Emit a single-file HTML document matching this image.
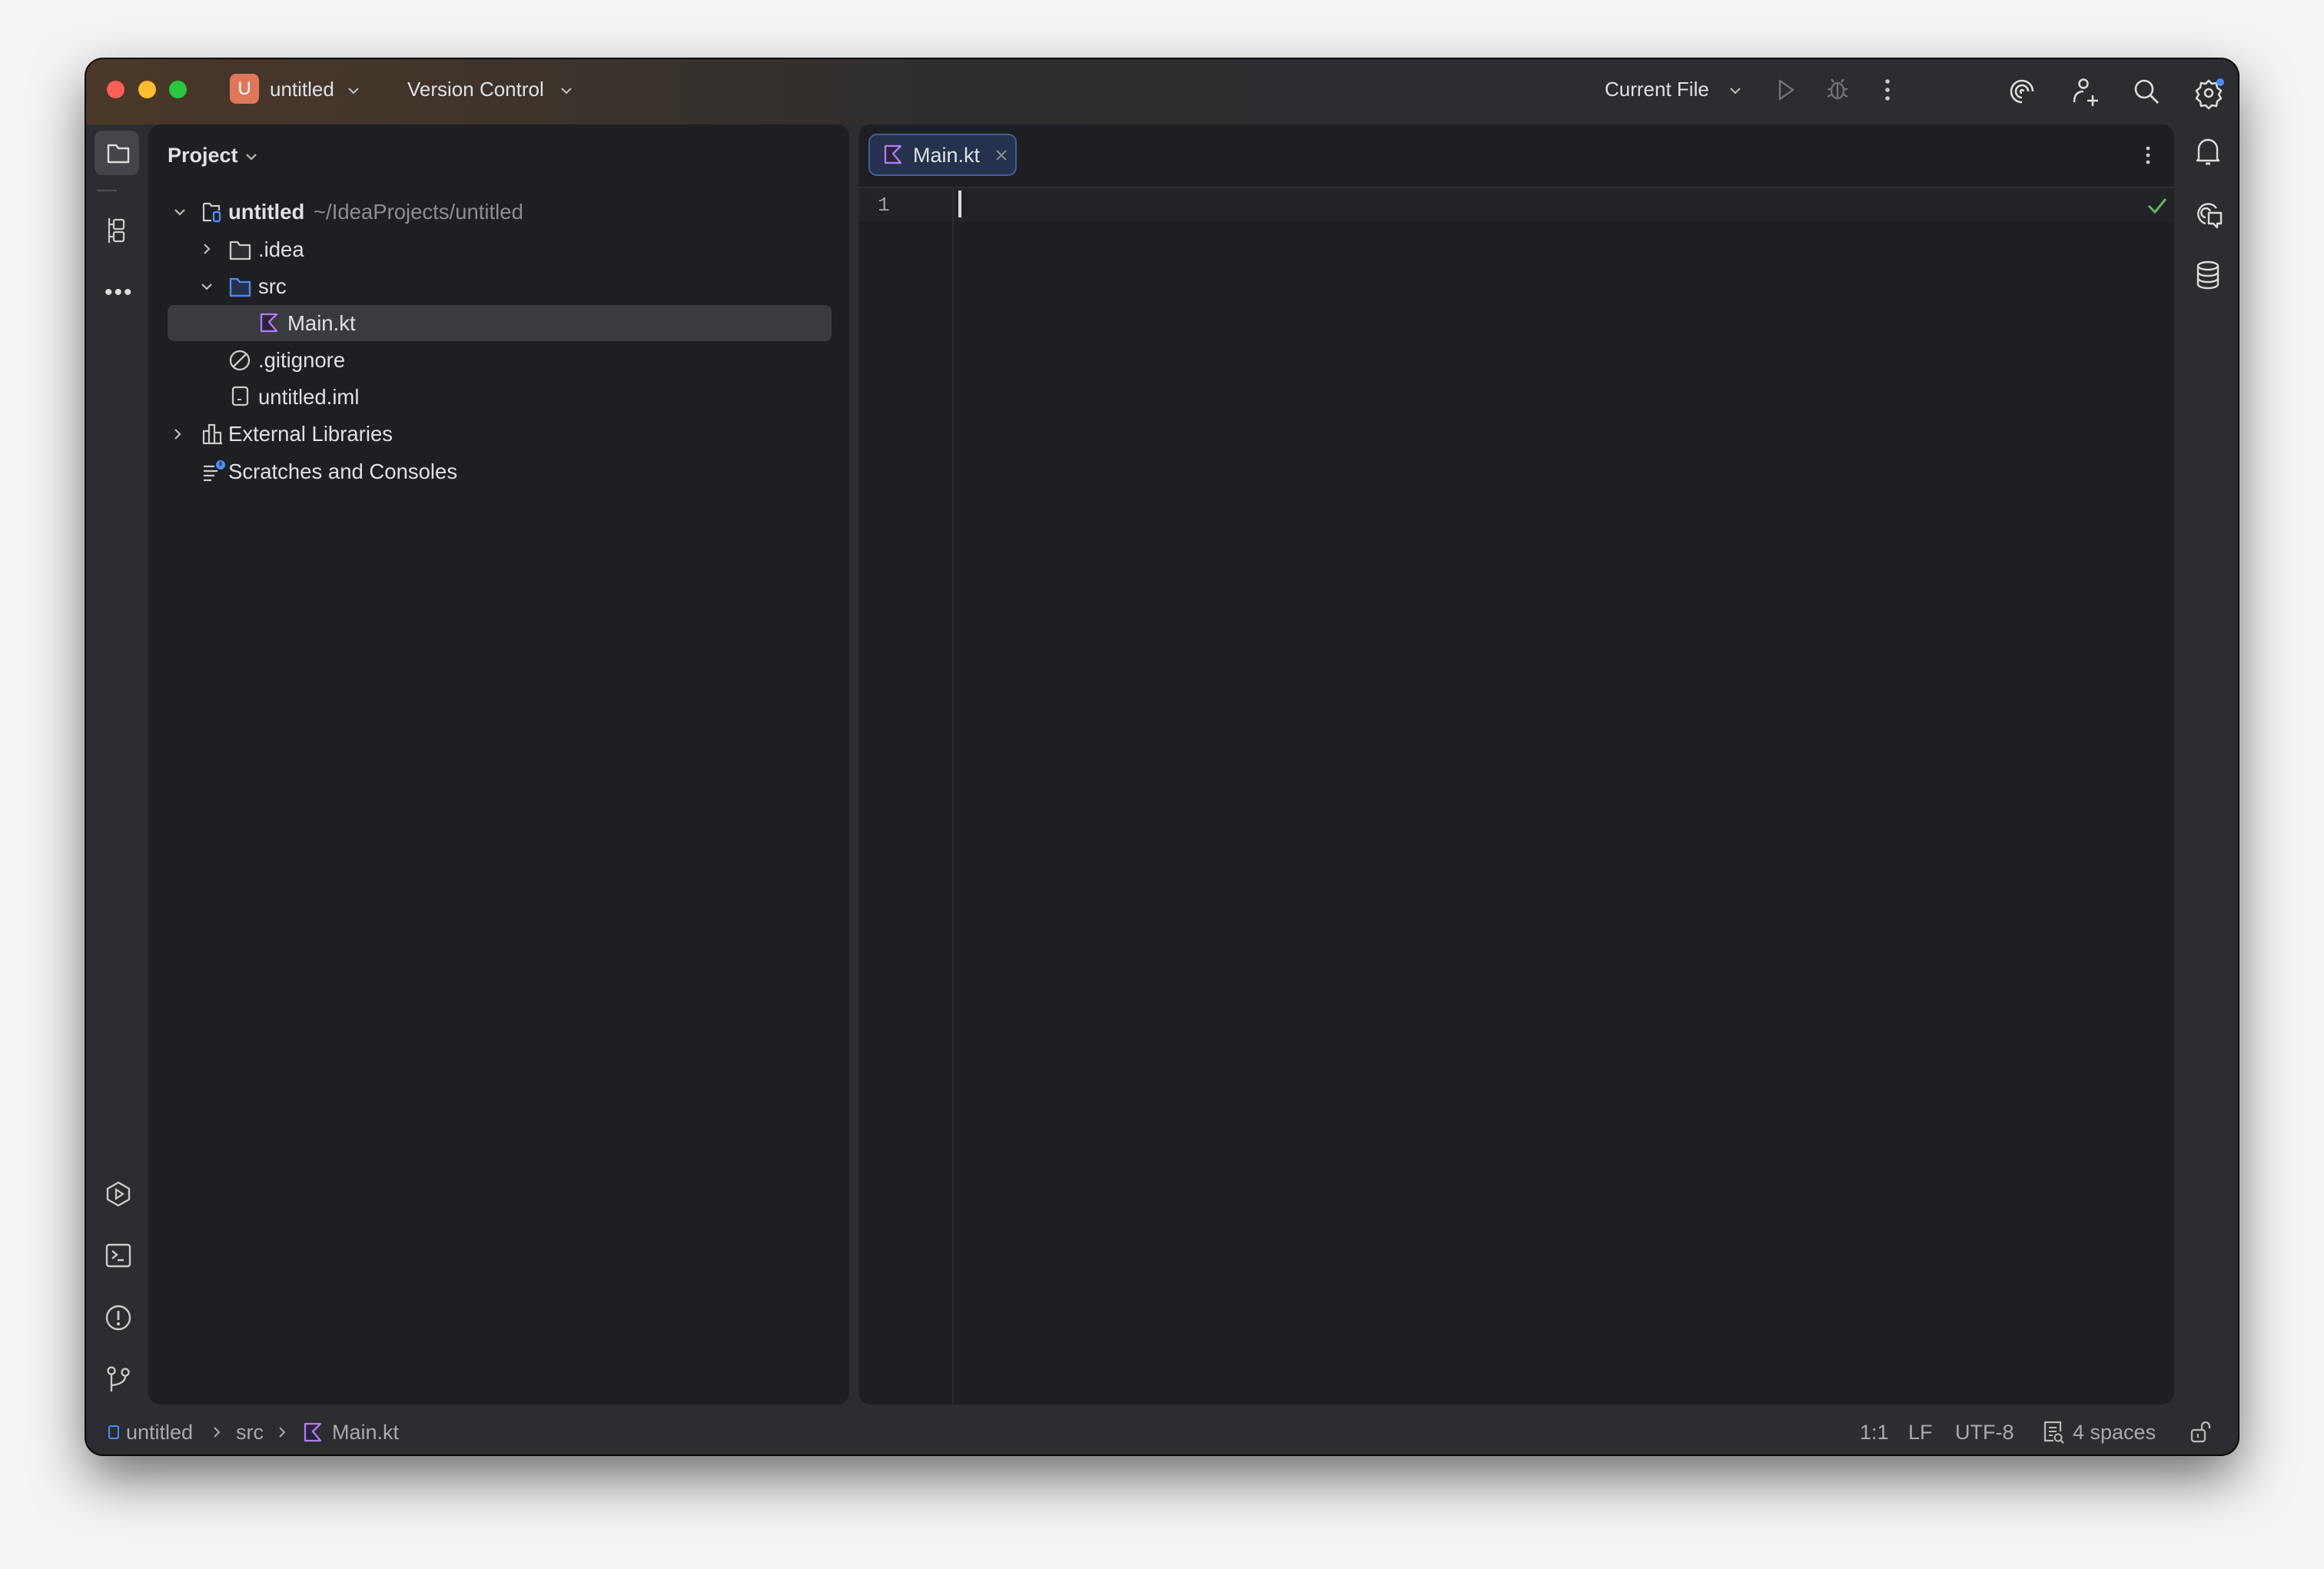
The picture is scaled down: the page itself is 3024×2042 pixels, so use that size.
<!DOCTYPE html>
<html><head><meta charset="utf-8"><style>
*{margin:0;padding:0;box-sizing:border-box}
body{width:3024px;height:2042px;background:#f4f4f4;position:relative;overflow:hidden;font-family:"Liberation Sans",sans-serif;color:#dfe1e5}
.win{position:absolute;left:112px;top:77px;width:2800px;height:1816px;border-radius:22px;background:#2b2d30;box-shadow:0 30px 70px rgba(0,0,0,.55),0 0 0 2px #0c0c0c;overflow:hidden}
.title{position:absolute;left:0;top:0;width:100%;height:85px;background:linear-gradient(90deg,#4b3828 0%,#3f342b 18%,#2e2d2e 40%,#2b2d30 60%)}
.a{position:absolute;white-space:nowrap}
.tl{position:absolute;top:28px;width:23px;height:23px;border-radius:50%}
.panel{position:absolute;background:#1e1f22;border-radius:16px}
.t{font-size:27.5px;line-height:48px;color:#dfe1e5}
svg{position:absolute;overflow:visible}
.st{font-size:27px;color:#a8abb0}
</style></head><body>
<div class="win">
 <div class="title">
  <div class="tl" style="left:27px;background:#fe5f57"></div>
  <div class="tl" style="left:68px;background:#febc2e"></div>
  <div class="tl" style="left:108px;background:#28c840"></div>
  <div class="a" style="left:187px;top:19px;width:38px;height:39px;border-radius:8px;background:#e0765a;color:#fff;font-size:24px;line-height:39px;text-align:center">U</div>
  <div class="a" style="left:239px;top:22px;font-size:26px;line-height:34px">untitled</div>
  <svg style="left:340px;top:36px" width="16" height="10"><path d="M2 2l6 6 6-6" stroke="#bbb" stroke-width="2.2" fill="none"/></svg>
  <div class="a" style="left:418px;top:22px;font-size:26px;line-height:34px">Version Control</div>
  <svg style="left:617px;top:36px" width="16" height="10"><path d="M2 2l6 6 6-6" stroke="#bbb" stroke-width="2.2" fill="none"/></svg>
  <div class="a" style="left:1976px;top:22px;font-size:26px;line-height:34px">Current File</div>
  <svg style="left:2138px;top:36px" width="16" height="10"><path d="M2 2l6 6 6-6" stroke="#bbb" stroke-width="2.2" fill="none"/></svg>
  <svg style="left:2200px;top:25px" width="24" height="30"><path d="M4 3v24l17-12z" stroke="#6f7277" stroke-width="2.4" fill="none" stroke-linejoin="round"/></svg>
  <svg style="left:2264px;top:22px" width="30" height="34"><ellipse cx="15" cy="19" rx="8" ry="10" stroke="#6f7277" stroke-width="2.4" fill="none"/><path d="M10 8l-3-4M20 8l3-4M7 17H2M28 17h-5M7 24l-5 3M23 24l5 3M15 10v19" stroke="#6f7277" stroke-width="2.4" fill="none"/></svg>
  <svg style="left:2340px;top:25px" width="8" height="32"><circle cx="4" cy="4" r="2.8" fill="#ccc"/><circle cx="4" cy="15" r="2.8" fill="#ccc"/><circle cx="4" cy="26" r="2.8" fill="#ccc"/></svg>
  <svg style="left:2502px;top:25px" width="34" height="34"><path d="M17 31a14 14 0 1 1 14-14M17 25a8 8 0 1 1 8-8M17 19a2 2 0 1 1 2-2" stroke="#ddd" stroke-width="2.6" fill="none"/></svg>
  <svg style="left:2584px;top:24px" width="36" height="40"><circle cx="15" cy="8" r="5.5" stroke="#ddd" stroke-width="2.5" fill="none"/><path d="M3 32q0-14 12-14M20 30h14M27 23v14" stroke="#ddd" stroke-width="2.5" fill="none"/></svg>
  <svg style="left:2664px;top:25px" width="36" height="36"><circle cx="14" cy="14" r="11" stroke="#ddd" stroke-width="2.6" fill="none"/><path d="M22 22l10 10" stroke="#ddd" stroke-width="2.8"/></svg>
  <svg style="left:2744px;top:24px" width="38" height="40"><circle cx="18" cy="20" r="5" stroke="#ddd" stroke-width="2.5" fill="none"/><path d="M18 4l4 4 6-1 1 6 5 4-3 5 3 5-5 4-1 6-6-1-4 4-4-4-6 1-1-6-5-4 3-5-3-5 5-4 1-6 6 1z" stroke="#ddd" stroke-width="2.5" fill="none" stroke-linejoin="round"/><circle cx="33" cy="6" r="5" fill="#4a8cf7"/></svg>
 </div>
 <div class="a" style="left:11px;top:93px;width:58px;height:58px;border-radius:10px;background:#43454a"></div>
 <svg style="left:27px;top:110px" width="30" height="26"><path d="M2 2h10l3 4h13v18H2z" stroke="#ddd" stroke-width="2.4" fill="none" stroke-linejoin="round"/></svg>
 <div class="a" style="left:14px;top:170px;width:26px;height:2px;background:#4e5157"></div>
 <svg style="left:28px;top:205px" width="24" height="36"><path d="M2 2v32M2 10h6M2 26h6" stroke="#ccc" stroke-width="2.2" fill="none"/><rect x="8" y="4" width="13" height="12" rx="2" stroke="#ccc" stroke-width="2.2" fill="none"/><rect x="8" y="20" width="13" height="12" rx="2" stroke="#ccc" stroke-width="2.2" fill="none"/></svg>
 <div class="a" style="left:24px;top:287px;color:#ddd;font-size:30px;letter-spacing:2px">•••</div>
 <svg style="left:25px;top:1460px" width="34" height="34"><path d="M17 2l14 8v14l-14 8-14-8V10z" stroke="#ccc" stroke-width="2.4" fill="none" stroke-linejoin="round"/><path d="M14 11v12l9-6z" stroke="#ccc" stroke-width="2.2" fill="none"/></svg>
 <svg style="left:25px;top:1541px" width="34" height="32"><rect x="2" y="2" width="30" height="28" rx="3" stroke="#ccc" stroke-width="2.4" fill="none"/><path d="M9 10l6 5-6 5M16 22h8" stroke="#ccc" stroke-width="2.4" fill="none"/></svg>
 <svg style="left:24px;top:1620px" width="36" height="36"><circle cx="18" cy="18" r="15" stroke="#ccc" stroke-width="2.4" fill="none"/><path d="M18 9v12" stroke="#ccc" stroke-width="2.8"/><circle cx="18" cy="26" r="2" fill="#ccc"/></svg>
 <svg style="left:26px;top:1700px" width="34" height="36"><circle cx="7" cy="7" r="4.5" stroke="#ccc" stroke-width="2.3" fill="none"/><circle cx="25" cy="9" r="4.5" stroke="#ccc" stroke-width="2.3" fill="none"/><path d="M7 12v22M25 14q0 10-18 12" stroke="#ccc" stroke-width="2.3" fill="none"/></svg>

 <div class="panel" style="left:81px;top:85px;width:912px;height:1666px"></div>
 <div class="a" style="left:106px;top:108px;font-size:27px;font-weight:bold;line-height:34px">Project</div>
 <svg style="left:207px;top:122px" width="16" height="10"><path d="M2 2l6 6 6-6" stroke="#bbb" stroke-width="2.2" fill="none"/></svg>
 <div class="a" style="left:106px;top:320px;width:864px;height:47px;border-radius:8px;background:#393b40"></div>
 <svg style="left:114px;top:194px" width="16" height="10"><path d="M2 2l6 6 6-6" stroke="#bbb" stroke-width="2.2" fill="none"/></svg>
 <svg style="left:151px;top:186px" width="30" height="28"><path d="M2 2h8l2 3h10v6M2 2v22h10" stroke="#ccc" stroke-width="2.2" fill="none"/><rect x="15" y="13" width="8" height="12" rx="2" stroke="#4a8cf7" stroke-width="2.4" fill="none"/></svg>
 <div class="a t" style="left:185px;top:175px;font-weight:bold">untitled</div>
 <div class="a t" style="left:296px;top:175px;color:#8b8e94">~/IdeaProjects/untitled</div>
 <svg style="left:152px;top:239px" width="10" height="16"><path d="M2 2l6 6-6 6" stroke="#bbb" stroke-width="2.2" fill="none"/></svg>
 <svg style="left:186px;top:236px" width="30" height="26"><path d="M2 2h9l3 4h13v18H2z" stroke="#ccc" stroke-width="2.3" fill="#2b2d30" stroke-linejoin="round"/></svg>
 <div class="a t" style="left:224px;top:224px">.idea</div>
 <svg style="left:149px;top:291px" width="16" height="10"><path d="M2 2l6 6 6-6" stroke="#bbb" stroke-width="2.2" fill="none"/></svg>
 <svg style="left:186px;top:284px" width="30" height="26"><path d="M2 2h9l3 4h13v18H2z" stroke="#548af7" stroke-width="2.3" fill="#25324d" stroke-linejoin="round"/></svg>
 <div class="a t" style="left:224px;top:272px">src</div>
 <svg style="left:226px;top:330px" width="26" height="26"><path d="M2 2h20L12 12l10 12H2z" stroke="#b57bee" stroke-width="2.3" fill="#2a2340" stroke-linejoin="round"/></svg>
 <div class="a t" style="left:262px;top:320px">Main.kt</div>
 <svg style="left:186px;top:378px" width="28" height="28"><circle cx="14" cy="14" r="12" stroke="#ccc" stroke-width="2.3" fill="none"/><path d="M6 22L22 6" stroke="#ccc" stroke-width="2.3"/></svg>
 <div class="a t" style="left:224px;top:368px">.gitignore</div>
 <svg style="left:189px;top:425px" width="24" height="28"><rect x="2" y="2" width="19" height="23" rx="3" stroke="#ccc" stroke-width="2.3" fill="none"/><path d="M8 18h5" stroke="#ccc" stroke-width="2"/></svg>
 <div class="a t" style="left:224px;top:416px">untitled.iml</div>
 <svg style="left:114px;top:480px" width="10" height="16"><path d="M2 2l6 6-6 6" stroke="#bbb" stroke-width="2.2" fill="none"/></svg>
 <svg style="left:151px;top:474px" width="28" height="28"><path d="M2 26V10h7v16M9 26V2h7v24M16 26V12h8v14zM1 26h25" stroke="#ccc" stroke-width="2.2" fill="none"/></svg>
 <div class="a t" style="left:185px;top:464px">External Libraries</div>
 <svg style="left:151px;top:520px" width="32" height="30"><path d="M2 10h14M2 16h18M2 22h14M2 28h10" stroke="#ccc" stroke-width="2.2"/><circle cx="24" cy="8" r="6" fill="#4a8cf7"/><path d="M24 4v5" stroke="#1e1f22" stroke-width="2"/></svg>
 <div class="a t" style="left:185px;top:513px">Scratches and Consoles</div>

 <div class="panel" style="left:1005px;top:85px;width:1712px;height:1666px"></div>
 <div class="a" style="left:1005px;top:166px;width:1712px;height:2px;background:#2b2d30"></div>
 <div class="a" style="left:1005px;top:168px;width:1712px;height:44px;background:#222327"></div>
 <div class="a" style="left:1127px;top:168px;width:2px;height:1583px;background:#2b2d30"></div>
 <div class="a" style="left:1018px;top:97px;width:193px;height:55px;border-radius:11px;background:#25324d;border:2px solid #3f5f9e"></div>
 <svg style="left:1038px;top:111px" width="26" height="26"><path d="M2 2h20L12 12l10 12H2z" stroke="#b57bee" stroke-width="2.3" fill="#2a2340" stroke-linejoin="round"/></svg>
 <div class="a" style="left:1076px;top:106px;font-size:27px;line-height:38px">Main.kt</div>
 <svg style="left:1183px;top:117px" width="16" height="16"><path d="M2 2l12 12M14 2L2 14" stroke="#8b8e94" stroke-width="2"/></svg>
 <svg style="left:2679px;top:113px" width="8" height="26"><circle cx="4" cy="3" r="2.4" fill="#ccc"/><circle cx="4" cy="12" r="2.4" fill="#ccc"/><circle cx="4" cy="21" r="2.4" fill="#ccc"/></svg>
 <div class="a" style="left:1030px;top:172px;font-family:'Liberation Mono',monospace;font-size:26px;line-height:36px;color:#9da0a6">1</div>
 <div class="a" style="left:1135px;top:171px;width:4px;height:35px;background:#ddd"></div>
 <svg style="left:2682px;top:180px" width="26" height="22"><path d="M2 11l8 8L24 2" stroke="#5fb865" stroke-width="3" fill="none"/></svg>

 <svg style="left:2745px;top:102px" width="32" height="40"><path d="M4 28V15a12 12 0 0 1 24 0v13l2 2H2z" stroke="#ddd" stroke-width="2.4" fill="none" stroke-linejoin="round"/><path d="M13 34h6" stroke="#ddd" stroke-width="3"/></svg>
 <svg style="left:2744px;top:184px" width="36" height="38"><path d="M14 30a13 13 0 1 1 14-20M14 22a6 6 0 1 1 6-8" stroke="#ddd" stroke-width="2.4" fill="none"/><path d="M18 16h16v14h-5v5l-5-5h-6z" stroke="#ddd" stroke-width="2.4" fill="#2b2d30" stroke-linejoin="round"/></svg>
 <svg style="left:2745px;top:262px" width="32" height="38"><ellipse cx="16" cy="7" rx="13" ry="5" stroke="#ddd" stroke-width="2.4" fill="none"/><path d="M3 7v24c0 3 6 5 13 5s13-2 13-5V7M3 15c0 3 6 5 13 5s13-2 13-5M3 23c0 3 6 5 13 5s13-2 13-5" stroke="#ddd" stroke-width="2.4" fill="none"/></svg>

 <div class="a" style="left:29px;top:1778px;width:14px;height:18px;border:2.4px solid #4a8cf7;border-radius:3px"></div>
 <div class="a st" style="left:52px;top:1770px;line-height:34px">untitled</div>
 <svg style="left:165px;top:1779px" width="10" height="16"><path d="M2 2l6 6-6 6" stroke="#a8abb0" stroke-width="2" fill="none"/></svg>
 <div class="a st" style="left:195px;top:1770px;line-height:34px">src</div>
 <svg style="left:250px;top:1779px" width="10" height="16"><path d="M2 2l6 6-6 6" stroke="#a8abb0" stroke-width="2" fill="none"/></svg>
 <svg style="left:283px;top:1774px" width="26" height="26"><path d="M2 2h20L12 12l10 12H2z" stroke="#b57bee" stroke-width="2.3" fill="#2a2340" stroke-linejoin="round"/></svg>
 <div class="a st" style="left:320px;top:1770px;line-height:34px">Main.kt</div>
 <div class="a st" style="left:2308px;top:1770px;line-height:34px">1:1</div>
 <div class="a st" style="left:2371px;top:1770px;line-height:34px">LF</div>
 <div class="a st" style="left:2432px;top:1770px;line-height:34px">UTF-8</div>
 <svg style="left:2546px;top:1772px" width="30" height="32"><path d="M14 26H3V2h20v12" stroke="#bbb" stroke-width="2.2" fill="none"/><path d="M8 9h10M8 14h10M8 19h5" stroke="#bbb" stroke-width="2"/><circle cx="20" cy="22" r="4.5" stroke="#bbb" stroke-width="2" fill="none"/><path d="M23 25l4 4" stroke="#bbb" stroke-width="2"/></svg>
 <div class="a st" style="left:2585px;top:1770px;line-height:34px">4 spaces</div>
 <svg style="left:2738px;top:1772px" width="30" height="30"><rect x="2" y="12" width="17" height="15" rx="3" stroke="#bbb" stroke-width="2.2" fill="none"/><path d="M10 17v5" stroke="#bbb" stroke-width="2"/><path d="M15 12V7a5 5 0 0 1 10 0v3" stroke="#bbb" stroke-width="2.2" fill="none"/></svg>
</div>
</body></html>
